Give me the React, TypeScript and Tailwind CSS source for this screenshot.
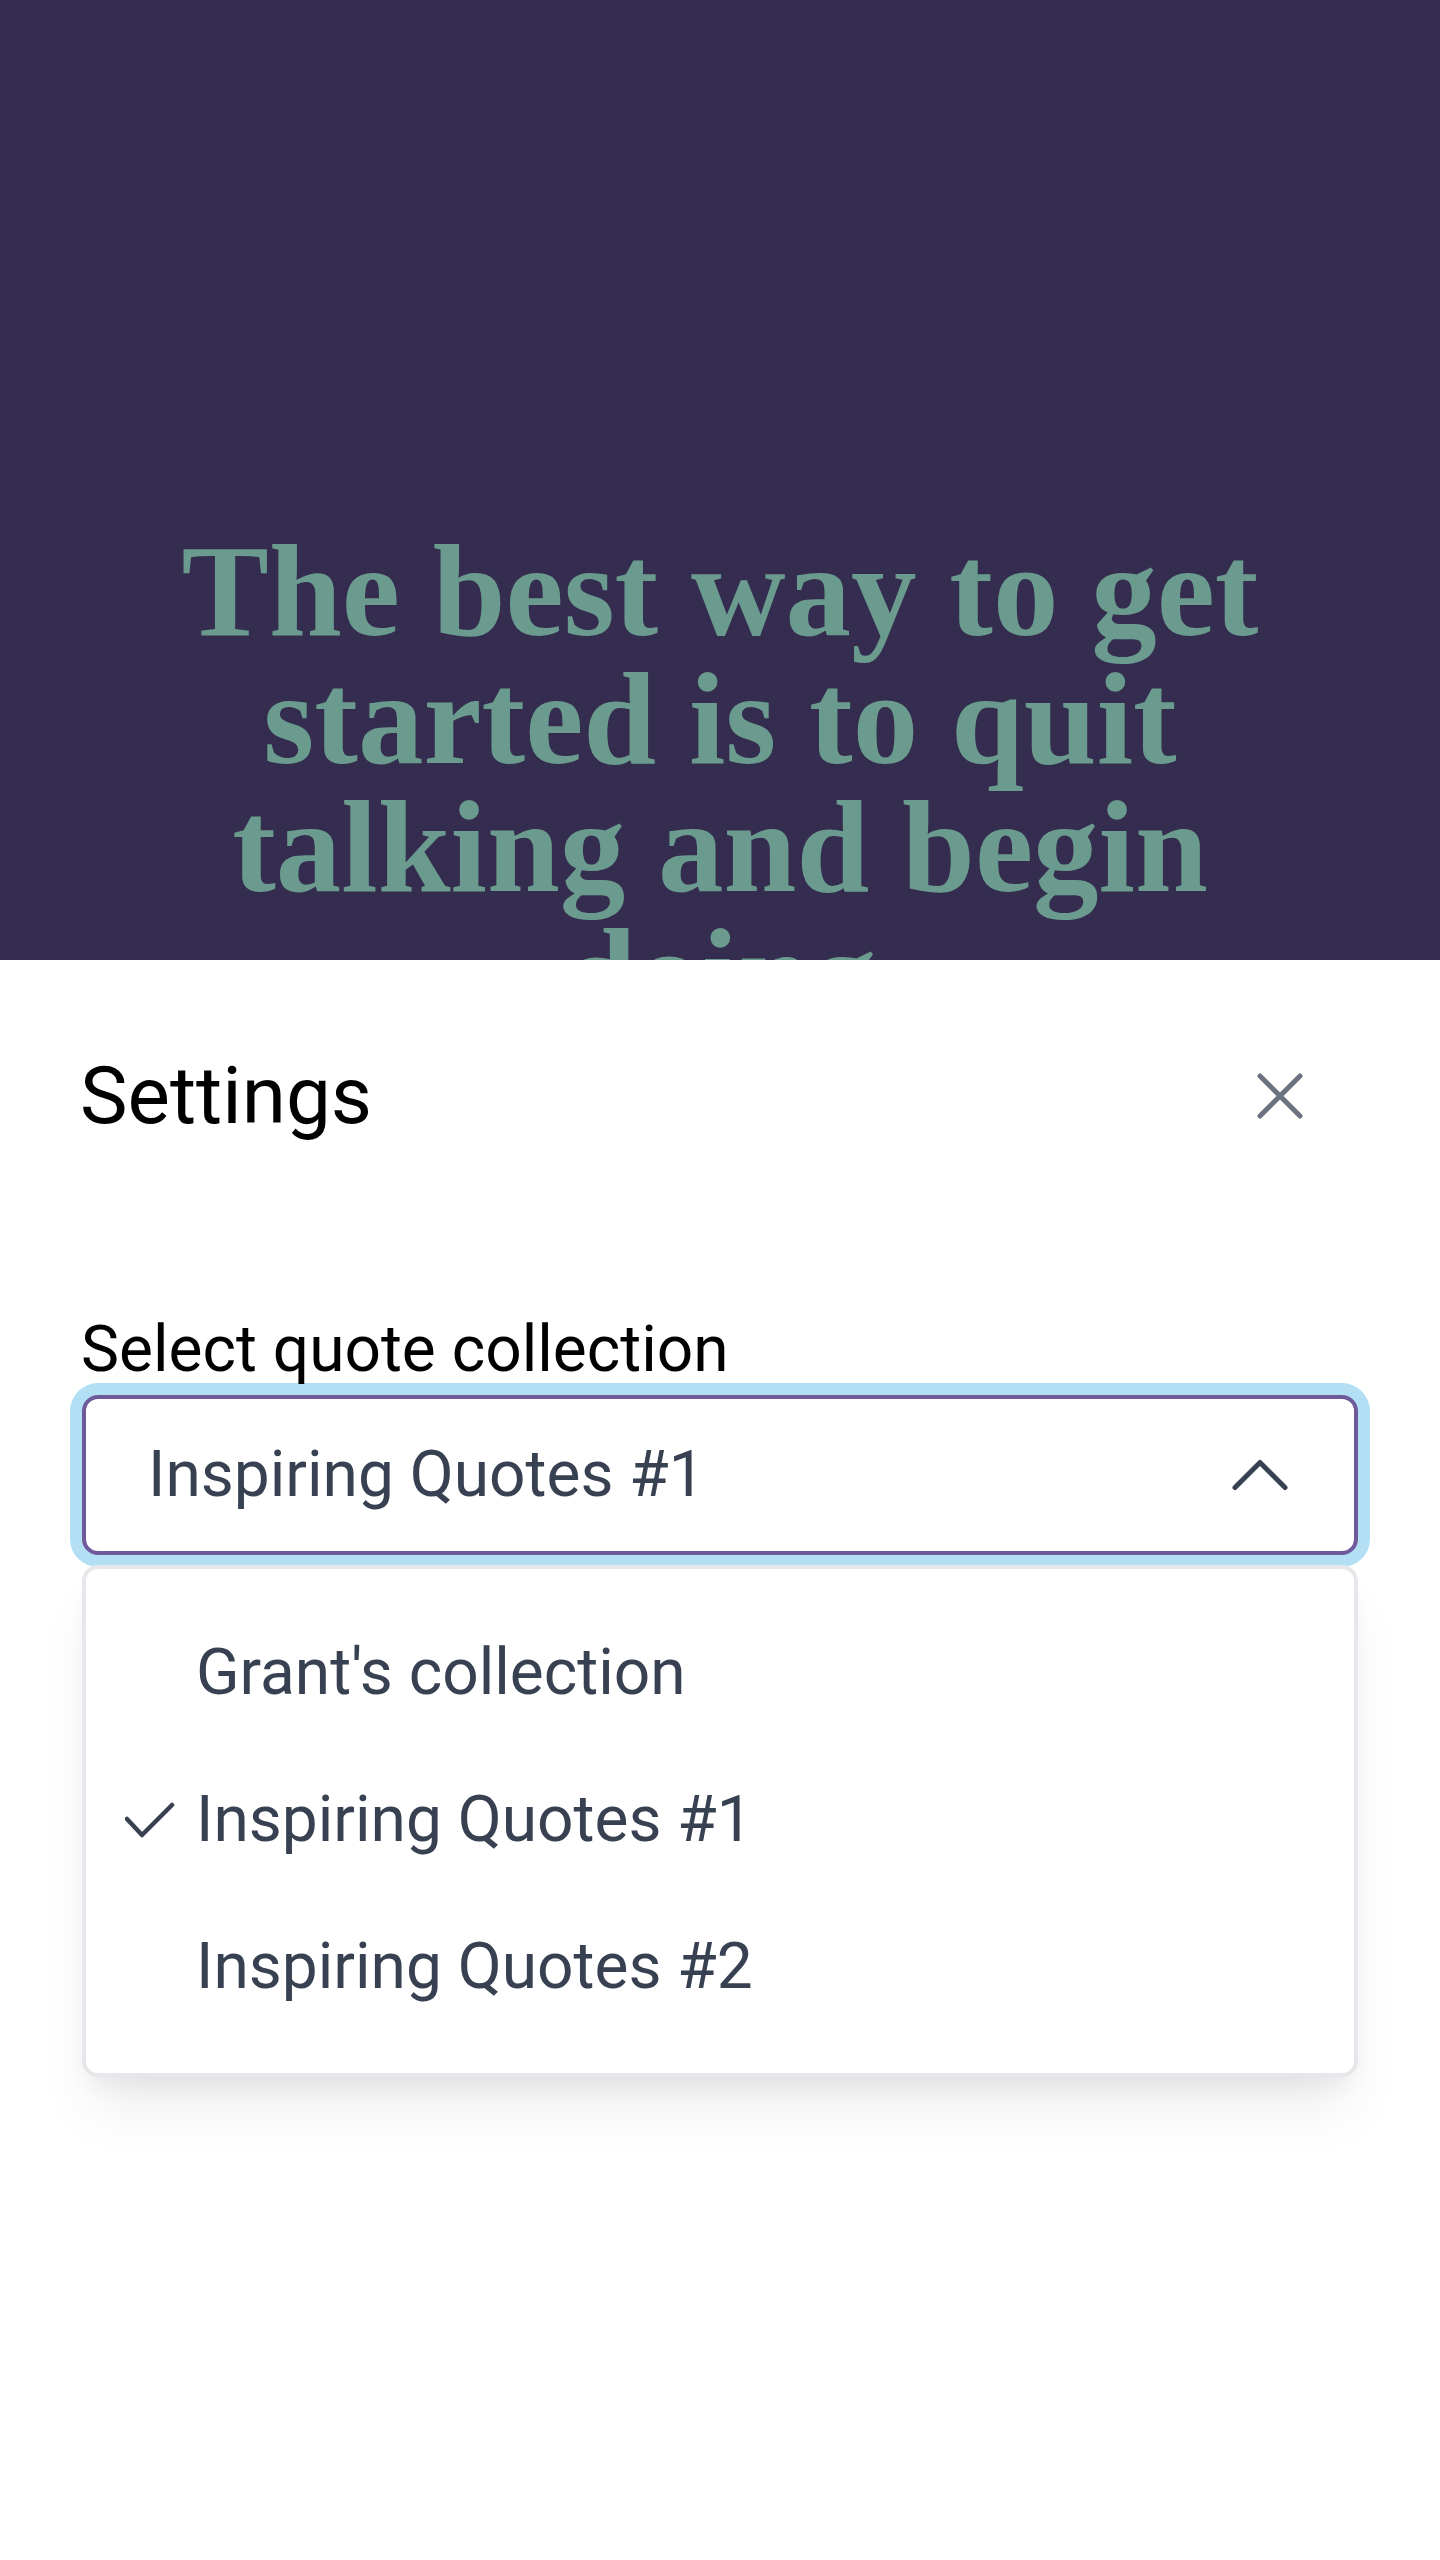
import React, { useState } from 'react';

const collections = ["Grant's collection", 'Inspiring Quotes #1', 'Inspiring Quotes #2'];

function XIcon() {
  return (
    <svg viewBox="0 0 24 24" fill="none" stroke="currentColor" strokeWidth={1.5} className="w-[80px] h-[80px] text-[#6b7280]">
      <path strokeLinecap="round" strokeLinejoin="round" d="M6 18L18 6M6 6l12 12" />
    </svg>
  );
}

function ChevronUp() {
  return (
    <svg viewBox="0 0 24 24" fill="none" stroke="currentColor" strokeWidth={1.5} className="w-[80px] h-[80px] text-[#374151]">
      <path strokeLinecap="round" strokeLinejoin="round" d="M4.5 15.75l7.5-7.5 7.5 7.5" />
    </svg>
  );
}

function CheckMark() {
  return (
    <svg viewBox="0 0 50 38" fill="none" stroke="currentColor" strokeWidth={4.5} className="w-[50px] h-[38px] ml-[39px] text-[#374151]">
      <path strokeLinecap="round" strokeLinejoin="round" d="M2 18 L17 34 L47 4" />
    </svg>
  );
}

export default function App() {
  const [selected, setSelected] = useState('Inspiring Quotes #1');

  return (
    <div className="relative w-[1440px] h-[2560px] overflow-hidden bg-[#342d4f]">
      {/* quote */}
      <div className="flex justify-center pt-[527px]">
        <h1 className="w-[1160px] text-center font-['Liberation_Serif',serif] font-bold text-[131px] leading-[128px] text-[#6a9b8e]">
          The best way to get started is to quit talking and begin doing
        </h1>
      </div>

      {/* settings sheet */}
      <div className="absolute inset-x-0 top-[960px] bottom-0 bg-white px-[82px] pt-[80px] font-['Roboto',sans-serif]">
        <div className="flex items-center justify-between">
          <h2 className="-ml-[2px] text-[80px] leading-[112px] text-black">Settings</h2>
          <button className="mr-[38px]">
            <XIcon />
          </button>
        </div>

        <label className="block -ml-[1px] mt-[166px] text-[64px] leading-[64px] text-black">Select quote collection</label>

        <div className="mt-[13px] h-[160px] flex items-center justify-between border-4 border-[#6e5a9b] rounded-[16px] ring-[12px] ring-[#b3dff4] pl-[62px] pr-[54px] bg-white">
          <span className="text-[64px] leading-[96px] text-[#374151]">{selected}</span>
          <ChevronUp />
        </div>

        <ul className="mt-[10px] border-4 border-[#e6e6eb] rounded-[16px] pt-[30px] pb-[33px] bg-white shadow-[0_40px_60px_-12px_rgba(0,0,0,0.08),0_16px_24px_-8px_rgba(0,0,0,0.06)]">
          {collections.map((c) => (
            <li
              key={c}
              onClick={() => setSelected(c)}
              className="h-[147px] flex items-center cursor-pointer"
            >
              <div className="w-[110px] flex items-center">
                {c === selected && <CheckMark />}
              </div>
              <span className="text-[64px] leading-[96px] text-[#374151]">{c}</span>
            </li>
          ))}
        </ul>
      </div>
    </div>
  );
}
